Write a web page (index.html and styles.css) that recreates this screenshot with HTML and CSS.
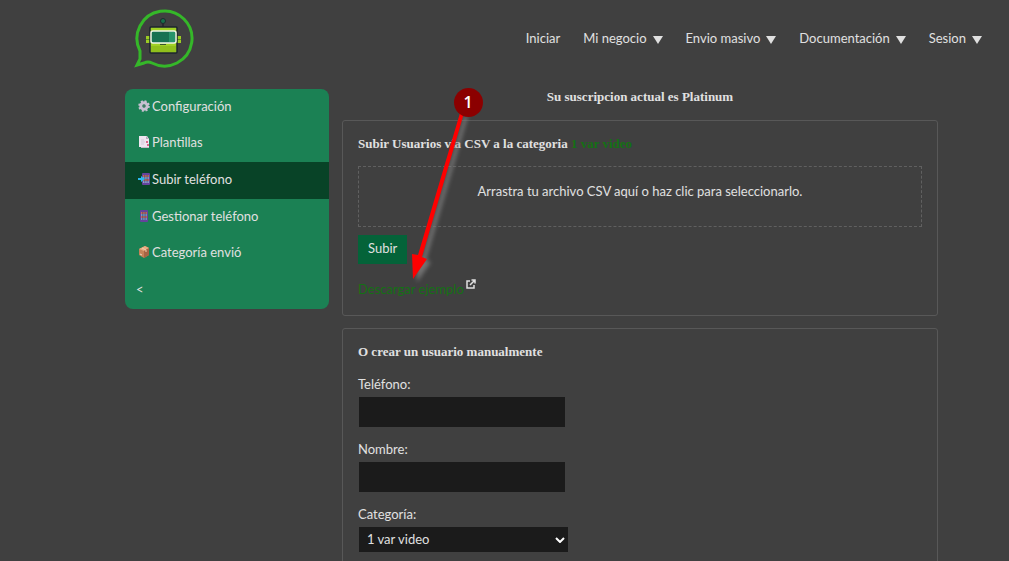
FILE: index.html
```html
<!DOCTYPE html>
<html lang="es">
<head>
    <meta charset="UTF-8">
    <meta name="viewport" content="width=device-width, initial-scale=1.0">
    <title>Subir teléfono</title>
    <link rel="stylesheet" href="styles.css">
</head>
<body>
    <header class="header">
        <a href="#" class="logo" aria-label="Inicio">
            <svg width="60" height="60" viewBox="0 0 60 60">
                <path d="M6 43A27.500 27.500 0 1 1 18 55Q14 53 10 55L3 57L6 51Z" fill="none" stroke="#35b729" stroke-width="3"/>
                <path d="M29 14v5" stroke="#20272b" stroke-width="1.500"/>
                <circle cx="29" cy="13" r="2.500" fill="#16704a" stroke="#20272b"/>
                <path d="M12 28h5v7h-5zM42 28h5v7h-5z" fill="#9ccc24"/>
                <path d="M12 31.500h4M43 31.500h4" stroke="#5d8f20"/>
                <rect x="16" y="19" width="27" height="26" rx="1" fill="#a0d025" stroke="#1c252c" stroke-width="1.500"/>
                <path d="M17 38h25v6H17z" fill="#91c01c"/>
                <rect x="17" y="23" width="25" height="12" rx="2" fill="#187252" stroke="#eef5e8" stroke-width="1.500"/>
                <path d="M35 24h6v10h-6z" fill="#27936b"/>
                <path d="M26 36.500h6" stroke="#38532b"/>
            </svg>
        </a>
        <nav class="menu">
            <a href="#">Iniciar</a>
            <a href="#">Mi negocio <span class="arrow"></span></a>
            <a href="#">Envio masivo <span class="arrow"></span></a>
            <a href="#">Documentación <span class="arrow"></span></a>
            <a href="#">Sesion <span class="arrow"></span></a>
        </nav>
    </header>

    <div class="container">
        <aside class="sidebar">
            <a href="#">
                <svg class="icon" viewBox="0 0 12 12">
                    <circle cx="6" cy="6" r="4.800" fill="none" stroke="#c9c0d2" stroke-width="2" stroke-dasharray="2 1.770"/>
                    <circle cx="6" cy="6" r="3.200" fill="none" stroke="#c9c0d2" stroke-width="3"/>
                    <circle cx="6" cy="6" r="1.200" fill="#497565"/>
                </svg>Configuración
            </a>
            <a href="#">
                <svg class="icon" viewBox="0 0 12 12">
                    <path d="M3 2h7l1 2v8H3z" fill="#c8bdcc"/>
                    <path d="M1 0h8l2 3v8H1z" fill="#eee6f1"/>
                    <path d="M8 0v3h3z" fill="#b8a9bf"/>
                    <path d="M3 4h3M3 6h4M3 8h3" stroke="#d4c9da"/>
                    <path d="M8 5h2v2H8zM9 8h2v2H9z" fill="#db668c"/>
                </svg>Plantillas
            </a>
            <a href="#" class="active">
                <svg class="icon" viewBox="0 0 12 12">
                    <rect x="4" y="0" width="8" height="12" rx="1" fill="#65439c"/>
                    <path d="M5 2h6v7H5z" fill="#374174"/>
                    <path d="M5 3h6M5 7h6" stroke="#f37951" stroke-width="1.500" stroke-dasharray="1.500 .7"/>
                    <path d="M5 5h6M5 9h6" stroke="#9fc0de" stroke-width="1.500" stroke-dasharray="1.500 .7"/>
                    <path d="M0 5h3V3l4 3-4 3V7H0z" fill="#2ab9ef"/>
                </svg>Subir teléfono
            </a>
            <a href="#">
                <svg class="icon" viewBox="0 0 12 12">
                    <rect x="2" y="0" width="8" height="12" rx="1" fill="#65439c"/>
                    <path d="M3 2h6v8H3z" fill="#374174"/>
                    <path d="M3 3h6M3 7h6" stroke="#f37951" stroke-width="1.500" stroke-dasharray="1.500 .7"/>
                    <path d="M3 5h6M3 9h6" stroke="#8bb5df" stroke-width="1.500" stroke-dasharray="1.500 .7"/>
                </svg>Gestionar teléfono
            </a>
            <a href="#">
                <svg class="icon" viewBox="0 0 12 12">
                    <path d="M1 3l6-3 4 2v7l-5 3-5-3z" fill="#c58258"/>
                    <path d="M1 3l6-3 4 2-5 3z" fill="#e7ad82"/>
                    <path d="M6 5l5-3v7l-5 3z" fill="#a66444"/>
                    <path d="M4 2l4 2v2" fill="none" stroke="#f0cdae"/>
                    <path d="M2 8l2 1" stroke="#edd5c1"/>
                </svg>Categoría envió
            </a>
            <a href="#" class="collapse">&lt;</a>
        </aside>

        <main class="content">
            <h1>Su suscripcion actual es Platinum</h1>

            <section class="card">
                <h2>Subir Usuarios vía CSV a la categoria <span class="green">1 var video</span></h2>
                <div class="drop-area">Arrastra tu archivo CSV aquí o haz clic para seleccionarlo.</div>
                <button type="button" class="btn">Subir</button>
                <div class="download">
                    <a href="#" class="green">Descargar ejemplo</a>
                    <svg width="10" height="10" viewBox="0 0 10 10" fill="none" stroke="#e0e0e0" stroke-width="1.500">
                        <path d="M4 2H1v7h7V6M4 6l5-5M5.500 1H9v3.500"/>
                    </svg>
                </div>
            </section>

            <section class="card">
                <h2>O crear un usuario manualmente</h2>
                <form class="form">
                    <label for="telefono">Teléfono:</label>
                    <input type="tel" id="telefono">
                    <label for="nombre">Nombre:</label>
                    <input type="text" id="nombre">
                    <label for="categoria">Categoría:</label>
                    <div class="select-box">
                        <select id="categoria">
                            <option>1 var video</option>
                        </select>
                        <svg class="chevron" width="10" height="6" viewBox="0 0 10 6">
                            <path d="M1 1l4 4 4-4" fill="none" stroke="#fff" stroke-width="2"/>
                        </svg>
                    </div>
                </form>
            </section>

            <!-- Paso 1: descargar el ejemplo -->
            <svg class="step" width="80" height="200" viewBox="0 0 80 200">
                <path class="shadow" d="M52 26L10 168 4 167 5 192 19 172 14 170 56 26z"/>
                <path d="M52 26L10 168 4 167 5 192 19 172 14 170 56 26z" fill="#f00"/>
                <circle cx="60.500" cy="15.500" r="14.500" fill="#8b0000"/>
                <text x="60" y="21" text-anchor="middle">1</text>
            </svg>
        </main>
    </div>
</body>
</html>
```

FILE: styles.css
```css
* {
    box-sizing: border-box;
}

body {
    margin: 0;
    background-color: #404040;
    color: #e0e0e0;
    font-family: Lato, "Open Sans", sans-serif;
    font-size: 13px;
    line-height: 20px;
}

a {
    color: inherit;
    text-decoration: none;
}

.header {
    display: flex;
    justify-content: space-between;
    align-items: center;
    padding: 8px 27px 8px 134px;
}

.logo {
    display: flex;
}

.menu {
    display: flex;
    gap: 23px;
}

.menu a {
    display: flex;
    align-items: center;
    gap: 6px;
}

.arrow {
    border: 5px solid transparent;
    border-top: 8px solid #e0e0e0;
    border-bottom: 0;
    margin-top: 4px;
}

.container {
    display: flex;
    align-items: flex-start;
    gap: 13px;
    padding: 13px 71px 0 125px;
}

.sidebar {
    display: grid;
    grid-auto-rows: 1fr;
    flex: 0 0 204px;
    min-height: 220px;
    border-radius: 8px;
    background: #1b8154;
    overflow: hidden;
}

.sidebar a {
    display: flex;
    align-items: center;
    gap: 2px;
    padding: 0 13px 3px;
}

.sidebar a.active {
    background: #084327;
}

.sidebar a.collapse {
    padding-left: 11px;
}

.icon {
    width: 12px;
    height: 12px;
}

.content {
    position: relative;
    flex: 1;
    min-width: 0;
}

h1,
h2 {
    margin: 0;
    font-family: "Liberation Serif", serif;
    font-size: 13px;
    line-height: 20px;
}

h1 {
    margin: -2px 0 13px;
    text-align: center;
}

.card {
    margin-bottom: 12px;
    padding: 13px 15px 16px;
    border: 1px solid #585858;
    border-radius: 3px;
}

.green {
    color: #147014;
}

.drop-area {
    height: 61px;
    margin: 12px 0 8px;
    padding-top: 14px;
    border: 1px dashed #606060;
    text-align: center;
}

.btn {
    display: block;
    height: 29px;
    padding: 0 10px 3px;
    border: 0;
    background: #046339;
    color: inherit;
    font: inherit;
}

.download {
    display: flex;
    align-items: flex-start;
    gap: 2px;
    margin-top: 15px;
}

.form {
    display: flex;
    flex-direction: column;
    align-items: flex-start;
    margin-top: 12px;
}

.form label {
    margin-bottom: 3px;
}

.form input,
.form select {
    border: 0;
    background: #1b1b1b;
    color: inherit;
    font: inherit;
}

.form input {
    width: 206px;
    height: 30px;
    margin: 0 0 12px 1px;
    padding: 0 8px;
}

.select-box {
    position: relative;
    margin-left: 1px;
}

.form select {
    width: 209px;
    height: 25px;
    padding: 0 8px 2px;
    appearance: none;
}

.chevron {
    position: absolute;
    top: 10px;
    right: 3px;
}

.step {
    position: absolute;
    top: -2px;
    left: 66px;
    pointer-events: none;
}

.step .shadow {
    fill: #888;
    opacity: .7;
    filter: blur(2px);
    transform: translate(4px, 3px);
}

.step text {
    fill: #fff;
    font-family: "Open Sans", sans-serif;
    font-size: 16px;
    font-weight: 600;
}
```
